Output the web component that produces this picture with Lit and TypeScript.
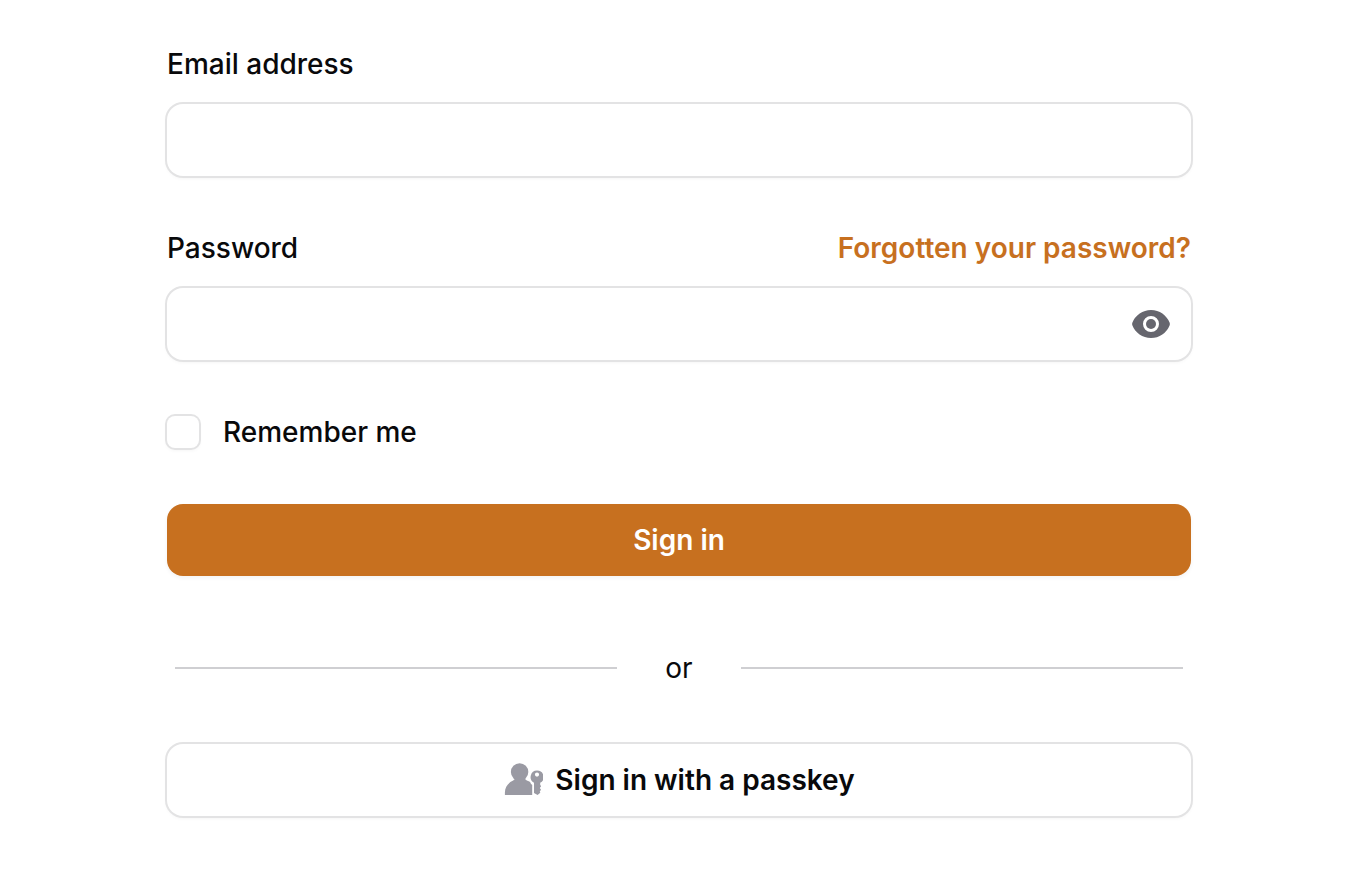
import { LitElement, html, css } from "lit";
import { customElement, state } from "lit/decorators.js";

@customElement("app-root")
export class AppRoot extends LitElement {
  @state() private revealed = false;

  static styles = css`
    :host {
      display: block;
      box-sizing: border-box;
      min-height: 100vh;
      padding: 40px 177px 64px 167px;
      background: #fff;
      color: #09090b;
      font-family: Inter, sans-serif;
      font-size: 28px;
      line-height: 48px;
      font-weight: 500;
    }
    * { box-sizing: border-box; }
    .form { display: flex; flex-direction: column; gap: 48px; margin: 0; }
    .field { display: flex; flex-direction: column; gap: 16px; }
    .head { display: flex; justify-content: space-between; }
    .link { color: #c7701f; font-weight: 600; text-decoration: none; }
    .box {
      display: flex;
      height: 72px;
      border-radius: 16px;
      background: #fff;
      box-shadow: 0 0 0 2px #e3e3e4, 0 2px 4px rgba(0, 0, 0, 0.06);
    }
    .input {
      flex: 1;
      min-width: 0;
      border: 0;
      outline: 0;
      padding: 0 24px;
      background: transparent;
      border-radius: 16px;
      font: inherit;
      color: inherit;
    }
    .eye {
      display: flex;
      align-items: center;
      border: 0;
      padding: 0 20px;
      background: transparent;
      color: #66666e;
      cursor: pointer;
    }
    .remember { display: flex; align-items: center; gap: 24px; }
    .check {
      appearance: none;
      width: 32px;
      height: 32px;
      margin: 0;
      border-radius: 8px;
      background: #fff;
      box-shadow: 0 0 0 2px #e3e3e4, 0 2px 4px rgba(0, 0, 0, 0.06);
    }
    .check:checked { background: #c7701f; }
    .button {
      display: flex;
      align-items: center;
      justify-content: center;
      gap: 12px;
      width: 100%;
      height: 72px;
      border: 0;
      border-radius: 16px;
      font: inherit;
      font-weight: 600;
      color: inherit;
      cursor: pointer;
    }
    .primary { background: #c7701f; color: #fff; box-shadow: 0 2px 4px rgba(0, 0, 0, 0.05); }
    .or {
      display: flex;
      align-items: center;
      gap: 48px;
      margin: 68px 8px 52px;
      font-weight: 400;
    }
    .line { flex: 1; height: 2px; background: #cfcfd2; }
    .key { color: #9a9aa3; }
  `;

  render() {
    return html`
      <form class="form" @submit=${(e: Event) => e.preventDefault()}>
        <div class="field">
          <div class="head"><label for="email">Email address</label></div>
          <div class="box"><input class="input" id="email" type="email" autocomplete="email" /></div>
        </div>
        <div class="field">
          <div class="head">
            <label for="password">Password</label>
            <a class="link" href="#">Forgotten your password?</a>
          </div>
          <div class="box">
            <input class="input" id="password" type=${this.revealed ? "text" : "password"} />
            <button class="eye" type="button" aria-label="Show password"
              @click=${() => (this.revealed = !this.revealed)}>
              <svg width="40" height="40" viewBox="0 0 20 20" fill="currentColor">
                <path d="M10 12.5a2.5 2.5 0 1 0 0-5 2.5 2.5 0 0 0 0 5Z" />
                <path fill-rule="evenodd" d="M.664 10.59a1.651 1.651 0 0 1 0-1.186A10.004 10.004 0 0 1 10 3c4.257 0 7.893 2.66 9.336 6.41.147.381.146.804 0 1.186A10.004 10.004 0 0 1 10 17c-4.257 0-7.893-2.66-9.336-6.41ZM14 10a4 4 0 1 1-8 0 4 4 0 0 1 8 0Z" />
              </svg>
            </button>
          </div>
        </div>
        <div class="remember">
          <input class="check" id="remember" type="checkbox" />
          <label for="remember">Remember me</label>
        </div>
        <button class="button primary" type="submit">Sign in</button>
      </form>
      <div class="or"><span class="line"></span><span>or</span><span class="line"></span></div>
      <button class="button box" type="button">
        <svg class="key" width="40" height="40" viewBox="0 0 40 40" fill="currentColor" aria-hidden="true">
          <circle cx="16.6" cy="12" r="8.7" />
          <path d="M1.9 35v-2.6c0-5.400 3.400-9.600 8.300-11.800l2.200-2h9l2.400 1.800c1.500.5 2.500 1 3.300 1.700.4 1.300 1.100 2.200 2.100 3V35Z" />
          <path fill-rule="evenodd" d="M34 10.600a6.500 6.500 0 0 1 3.200 12.200v2l.9 1.400-1.300 1.700 1.200 1.800-1.200 1.700.5 1.300-2.700 2.300-3.600-2V22.800a6.500 6.500 0 0 1 3-12.200Zm0 1.900a2.100 2.100 0 1 0 0 4.200 2.100 2.100 0 0 0 0-4.200Z" />
        </svg>
        Sign in with a passkey
      </button>
    `;
  }
}
